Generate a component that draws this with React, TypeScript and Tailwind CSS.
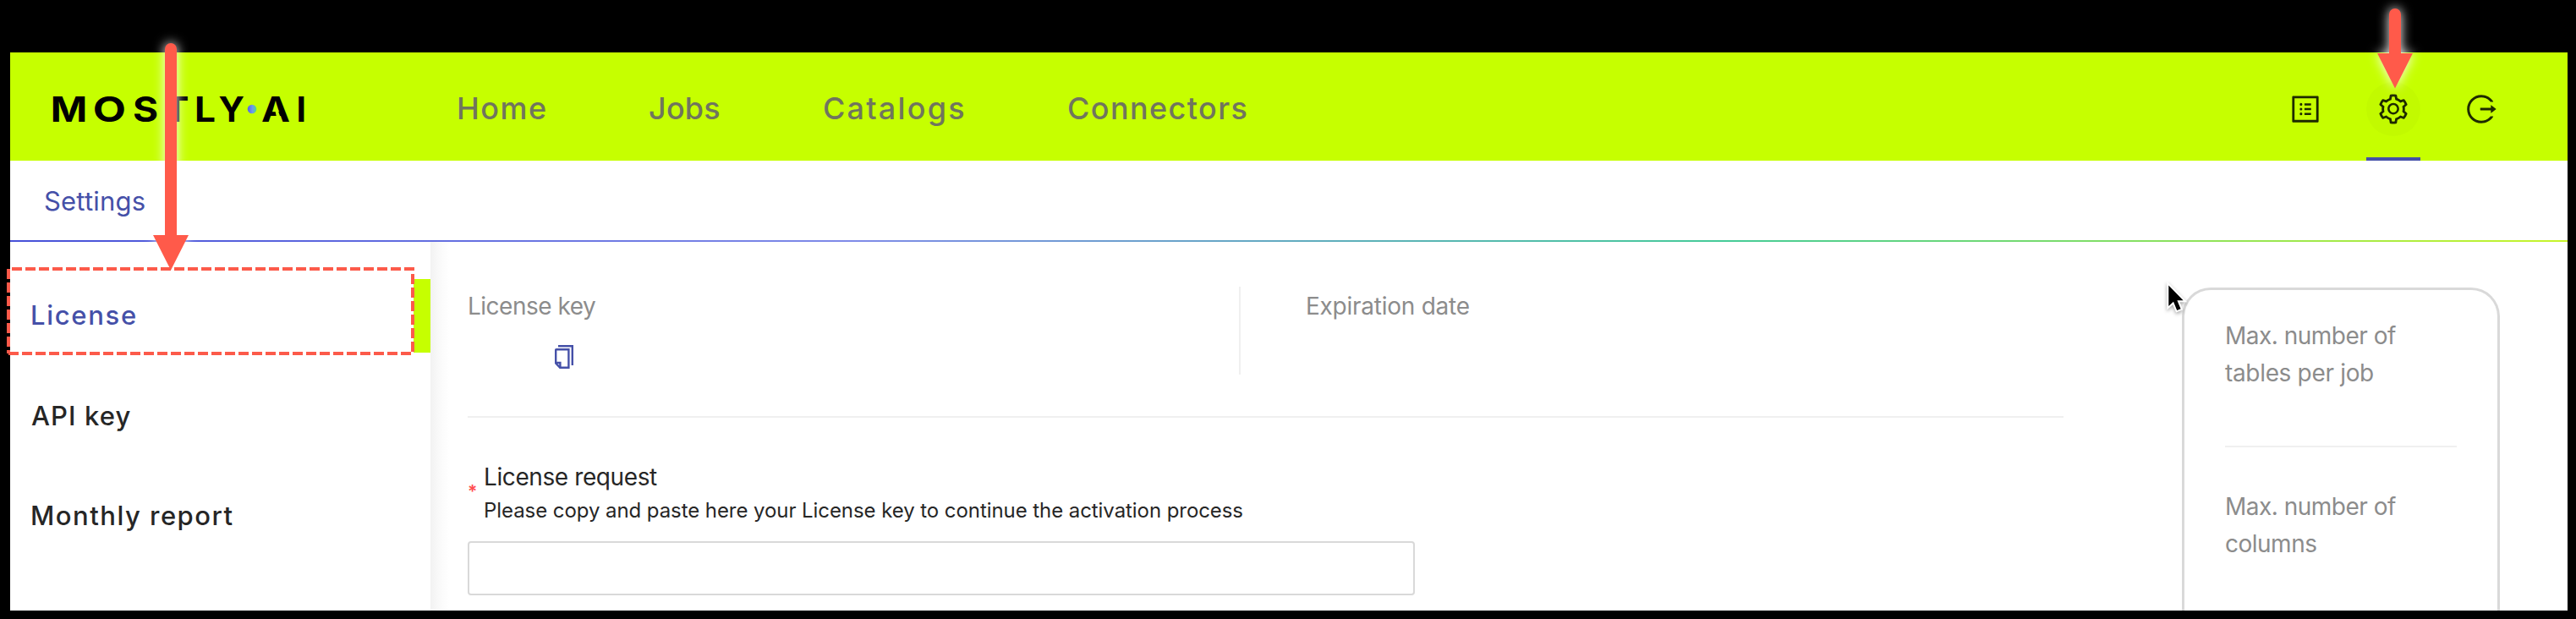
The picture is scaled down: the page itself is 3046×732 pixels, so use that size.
import { AiOutlineLogout, AiOutlineProfile, AiOutlineSetting } from "react-icons/ai";

function Logo() {
  return (
    <svg className="h-[128px] w-[320px] shrink-0" viewBox="0 0 320 128">
      <defs>
        <linearGradient id="dot" x1="0" x2="1" y1="0" y2="0">
          <stop offset="0" stopColor="#5560e6" />
          <stop offset="0.55" stopColor="#6e9be8" />
          <stop offset="1" stopColor="#4ddc80" />
        </linearGradient>
      </defs>
      <g fontFamily="Inter, sans-serif" fontSize="41" fontWeight="700" fill="#000">
        <text x="7.8" y="82" textLength="43.5" lengthAdjust="spacingAndGlyphs">M</text>
        <text x="57.8" y="82" textLength="39.2" lengthAdjust="spacingAndGlyphs">O</text>
        <text x="105" y="82" textLength="30.2" lengthAdjust="spacingAndGlyphs">S</text>
        <text x="142" y="82" textLength="29.4" lengthAdjust="spacingAndGlyphs">T</text>
        <text x="178" y="82" textLength="25" lengthAdjust="spacingAndGlyphs">L</text>
        <text x="206.5" y="82" textLength="30.5" lengthAdjust="spacingAndGlyphs">Y</text>
        <text x="257" y="82" textLength="34" lengthAdjust="spacingAndGlyphs">A</text>
        <text x="298.5" y="82">I</text>
      </g>
      <path d="M273.5 69.5H277L279.5 76.5H275Z" fill="#c6ff00" />
      <circle cx="246" cy="67" r="5.3" fill="url(#dot)" />
    </svg>
  );
}

function CopyIcon() {
  return (
    <svg className="h-[28px] w-[22px]" viewBox="0 0 22 28" fill="none" stroke="#4550a8" strokeWidth="2.4">
      <path d="M4 1.2H20.8V24" />
      <path d="M1.8 5.2H16.4V26.8H6.2L1.2 21.6V5.8Q1.2 5.2 1.8 5.2Z" />
      <path d="M1 21H6.4V27" />
    </svg>
  );
}

function Arrow({ shaft, place }: { shaft: number; place: string }) {
  const base = 40 + shaft;
  const outline = `M14 47a7 7 0 0 1 14 0V${base}H42L21 ${base + 41.5}L0 ${base}H14Z`;
  return (
    <svg
      className={`absolute overflow-visible ${place}`}
      width="42"
      height={base + 42}
      viewBox={`0 0 42 ${base + 42}`}
    >
      <defs>
        <filter id={`glow${shaft}`} filterUnits="userSpaceOnUse" x="-40" y="0" width="122" height={base + 82}>
          <feGaussianBlur stdDeviation="7" />
        </filter>
      </defs>
      <path d={outline} fill="#fff" filter={`url(#glow${shaft})`} />
      <path d={outline} fill="#ff5a4a" />
    </svg>
  );
}

function Cursor() {
  return (
    <svg className="absolute left-[2558px] top-[330px] drop-shadow-[0_2px_2px_rgba(0,0,0,0.35)]" width="32" height="46" viewBox="0 0 32 46">
      <path
        d="M6.3 7.5V32L12 26.8L16.2 37L20.6 35.2L16.4 25.2H23.6Z"
        fill="#000"
        stroke="#fff"
        strokeWidth="4"
        strokeLinejoin="miter"
        paintOrder="stroke"
      />
    </svg>
  );
}

export default function App() {
  return (
    <div className="relative h-[732px] w-[3046px] overflow-hidden bg-black pl-[12px] pr-[10px] pt-[62px] font-[Inter,sans-serif]">
      <div className="flex h-[660px] flex-col overflow-hidden bg-white">
        <header className="flex h-[128px] shrink-0 items-center bg-[#c6ff00] pl-[40px]">
          <Logo />
          <nav className="flex pl-[168px] pt-[4px] text-[36px] font-[550] leading-[44px] text-[#70755e]">
            <a className="w-[227px] tracking-[1.5px]">Home</a>
            <a className="w-[206px] tracking-[0.2px]">Jobs</a>
            <a className="w-[289px] tracking-[2.2px]">Catalogs</a>
            <a className="tracking-[1.4px]">Connectors</a>
          </nav>
          <div className="ml-auto mr-[70px] flex h-full gap-[40px] text-[40px] text-[#1e2a00]">
            <div className="flex w-[64px] flex-col items-center pt-[35px]">
              <div className="flex h-[64px] w-[64px] items-center justify-center">
                <AiOutlineProfile />
              </div>
            </div>
            <div className="flex w-[64px] flex-col items-center justify-between pt-[35px]">
              <div className="flex h-[64px] w-[64px] items-center justify-center rounded-full bg-black/[0.02]">
                <AiOutlineSetting />
              </div>
              <div className="h-[4px] w-[64px] bg-[#4550a8]" />
            </div>
            <div className="flex w-[64px] flex-col items-center pt-[35px]">
              <div className="flex h-[64px] w-[64px] items-center justify-center">
                <AiOutlineLogout />
              </div>
            </div>
          </div>
        </header>

        <div className="flex h-[94px] shrink-0 items-center pl-[40px] pt-[2px] text-[31px] tracking-[0.2px] text-[#4550a8]">
          Settings
        </div>
        <div className="h-[2px] shrink-0 bg-[linear-gradient(90deg,#4650d8_0%,#7f8be8_33%,#45cb98_67%,#c8f52a_100%)]" />

        <div className="flex min-h-0 flex-1">
          <aside className="flex w-[497px] shrink-0 flex-col gap-[31px] pt-[44px] text-[31px] font-[550] text-[#262626]">
            <div className="flex h-[87px] items-center justify-between pl-[24px] tracking-[1.7px] text-[#4550a8]">
              License
              <span className="h-[87px] w-[20px] bg-[#c6ff00]" />
            </div>
            <div className="flex h-[87px] items-center pl-[25px] pt-px tracking-[1.1px]">API key</div>
            <div className="flex h-[87px] items-center pl-[24px] pt-px tracking-[1.5px]">Monthly report</div>
          </aside>
          <div className="w-[22px] shrink-0 bg-[linear-gradient(90deg,#f2f2f2,#fafafa_50%,#ffffff)]" />

          <main className="w-[1909px] shrink-0 pl-[22px] pt-[53px] text-[28px] leading-[44px]">
            <section className="flex h-[104px] text-[#8c8c8c]">
              <div className="w-[914px] border-r-2 border-[#f0f0f0] pt-[1px] tracking-[-0.5px]">
                License key
                <div className="pl-[103px] pt-[24px]">
                  <CopyIcon />
                </div>
              </div>
              <div className="pl-[77px] pt-[1px] tracking-[-0.25px]">Expiration date</div>
            </section>
            <div className="mt-[49px] h-[2px] bg-[#f0f0f0]" />
            <section className="pt-[48px] text-[#262626]">
              <div className="flex items-center">
                <span className="w-[19px] text-[21px] font-semibold leading-[20px] text-[#ff4d4f]">*</span>
                <div>
                  <div className="tracking-[-0.4px]">License request</div>
                  <div className="text-[24px] leading-[36px] tracking-[-0.07px]">
                    Please copy and paste here your License key to continue the activation process
                  </div>
                </div>
              </div>
              <input className="mt-[18px] block h-[64px] w-[1120px] rounded-[4px] border-2 border-[#d9d9d9] bg-white" />
            </section>
          </main>

          <aside className="ml-[140px] mt-[54px] h-[420px] w-[376px] rounded-t-[34px] border-[3px] border-b-0 border-[#d9d9d9] px-[48px] pt-[32px] text-[28px] leading-[44px] text-[#8c8c8c]">
            <div className="tracking-[-0.5px]">Max. number of</div>
            <div className="tracking-[-0.33px]">tables per job</div>
            <div className="mt-[64px] h-[2px] bg-[#f0f0f0]" />
            <div className="mt-[48px] tracking-[-0.5px]">Max. number of</div>
            <div className="tracking-[-0.5px]">columns</div>
          </aside>
        </div>
      </div>

      <Arrow shaft={227} place="left-[181px] top-[51px] -mt-[40px]" />
      <Arrow shaft={53} place="left-[2811px] top-[10px] -mt-[40px]" />
      <svg className="absolute left-0 top-[310px]" width="500" height="116" viewBox="0 0 500 116" stroke="#fc5a4a" strokeWidth="4" strokeDasharray="12 4">
        <path d="M14 8H490" />
        <path d="M488 14V106" />
        <path d="M10 108H486" />
        <path d="M10 8V108" />
      </svg>
      <Cursor />
    </div>
  );
}
